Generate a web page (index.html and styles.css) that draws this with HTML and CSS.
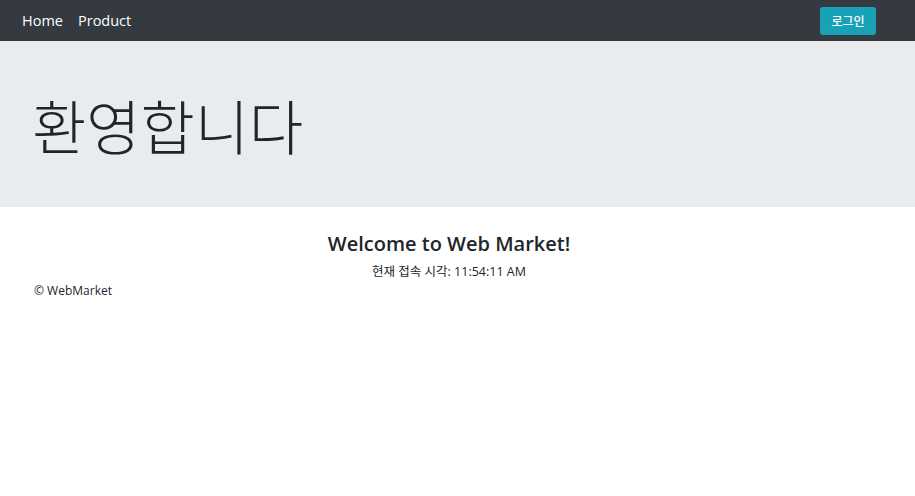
FILE: index.html
```html
<!DOCTYPE html>
<html lang="ko">
<head>
  <meta charset="UTF-8">
  <meta name="viewport" content="width=device-width, initial-scale=1.0">
  <title>Welcome</title>
  <link rel="stylesheet" href="styles.css">
</head>
<body>
  <nav class="navbar">
    <div class="nav-links">
      <a class="nav-link" href="#">Home</a>
      <a class="nav-link" href="#">Product</a>
    </div>
    <button class="btn-login">로그인</button>
  </nav>

  <div class="jumbotron">
    <h1 class="display">환영합니다</h1>
  </div>

  <main class="content">
    <h3 class="welcome">Welcome to Web Market!</h3>
    <p class="time">현재 접속 시각: 11:54:11 AM</p>
  </main>

  <footer class="footer">&copy; WebMarket</footer>
</body>
</html>
```

FILE: styles.css
```css
body {
  margin: 0;
  font-family: "Open Sans", "Noto Sans CJK KR", sans-serif;
  color: #212529;
  background: #fff;
}
.navbar {
  height: 41px;
  background-color: #343a40;
  display: flex;
  align-items: center;
  justify-content: space-between;
  padding: 0 39px 0 22px;
}
.nav-links {
  display: flex;
  gap: 15px;
}
.nav-link {
  color: #fff;
  text-decoration: none;
  font-size: 14.5px;
}
.btn-login {
  background-color: #17a2b8;
  border: none;
  border-radius: 3px;
  color: #fff;
  font-family: "Noto Sans CJK KR", sans-serif;
  font-size: 12px;
  font-weight: 500;
  width: 56px;
  height: 28px;
  padding: 0;
  cursor: pointer;
}
.jumbotron {
  background-color: #e9ecef;
  height: 166px;
  display: flex;
  align-items: center;
  padding: 0 32px;
}
.display {
  margin: 0;
  font-family: "Noto Sans CJK KR", sans-serif;
  font-weight: 300;
  font-size: 59px;
  line-height: 1;
}
.content {
  text-align: center;
  padding: 23px 17px 0 0;
}
.welcome {
  margin: 0;
  font-size: 20px;
  font-weight: 600;
  line-height: 28px;
}
.time {
  margin: 5px 0 0;
  font-size: 12.5px;
  line-height: 18px;
}
.footer {
  padding: 1px 34px;
  font-size: 12px;
}
```
